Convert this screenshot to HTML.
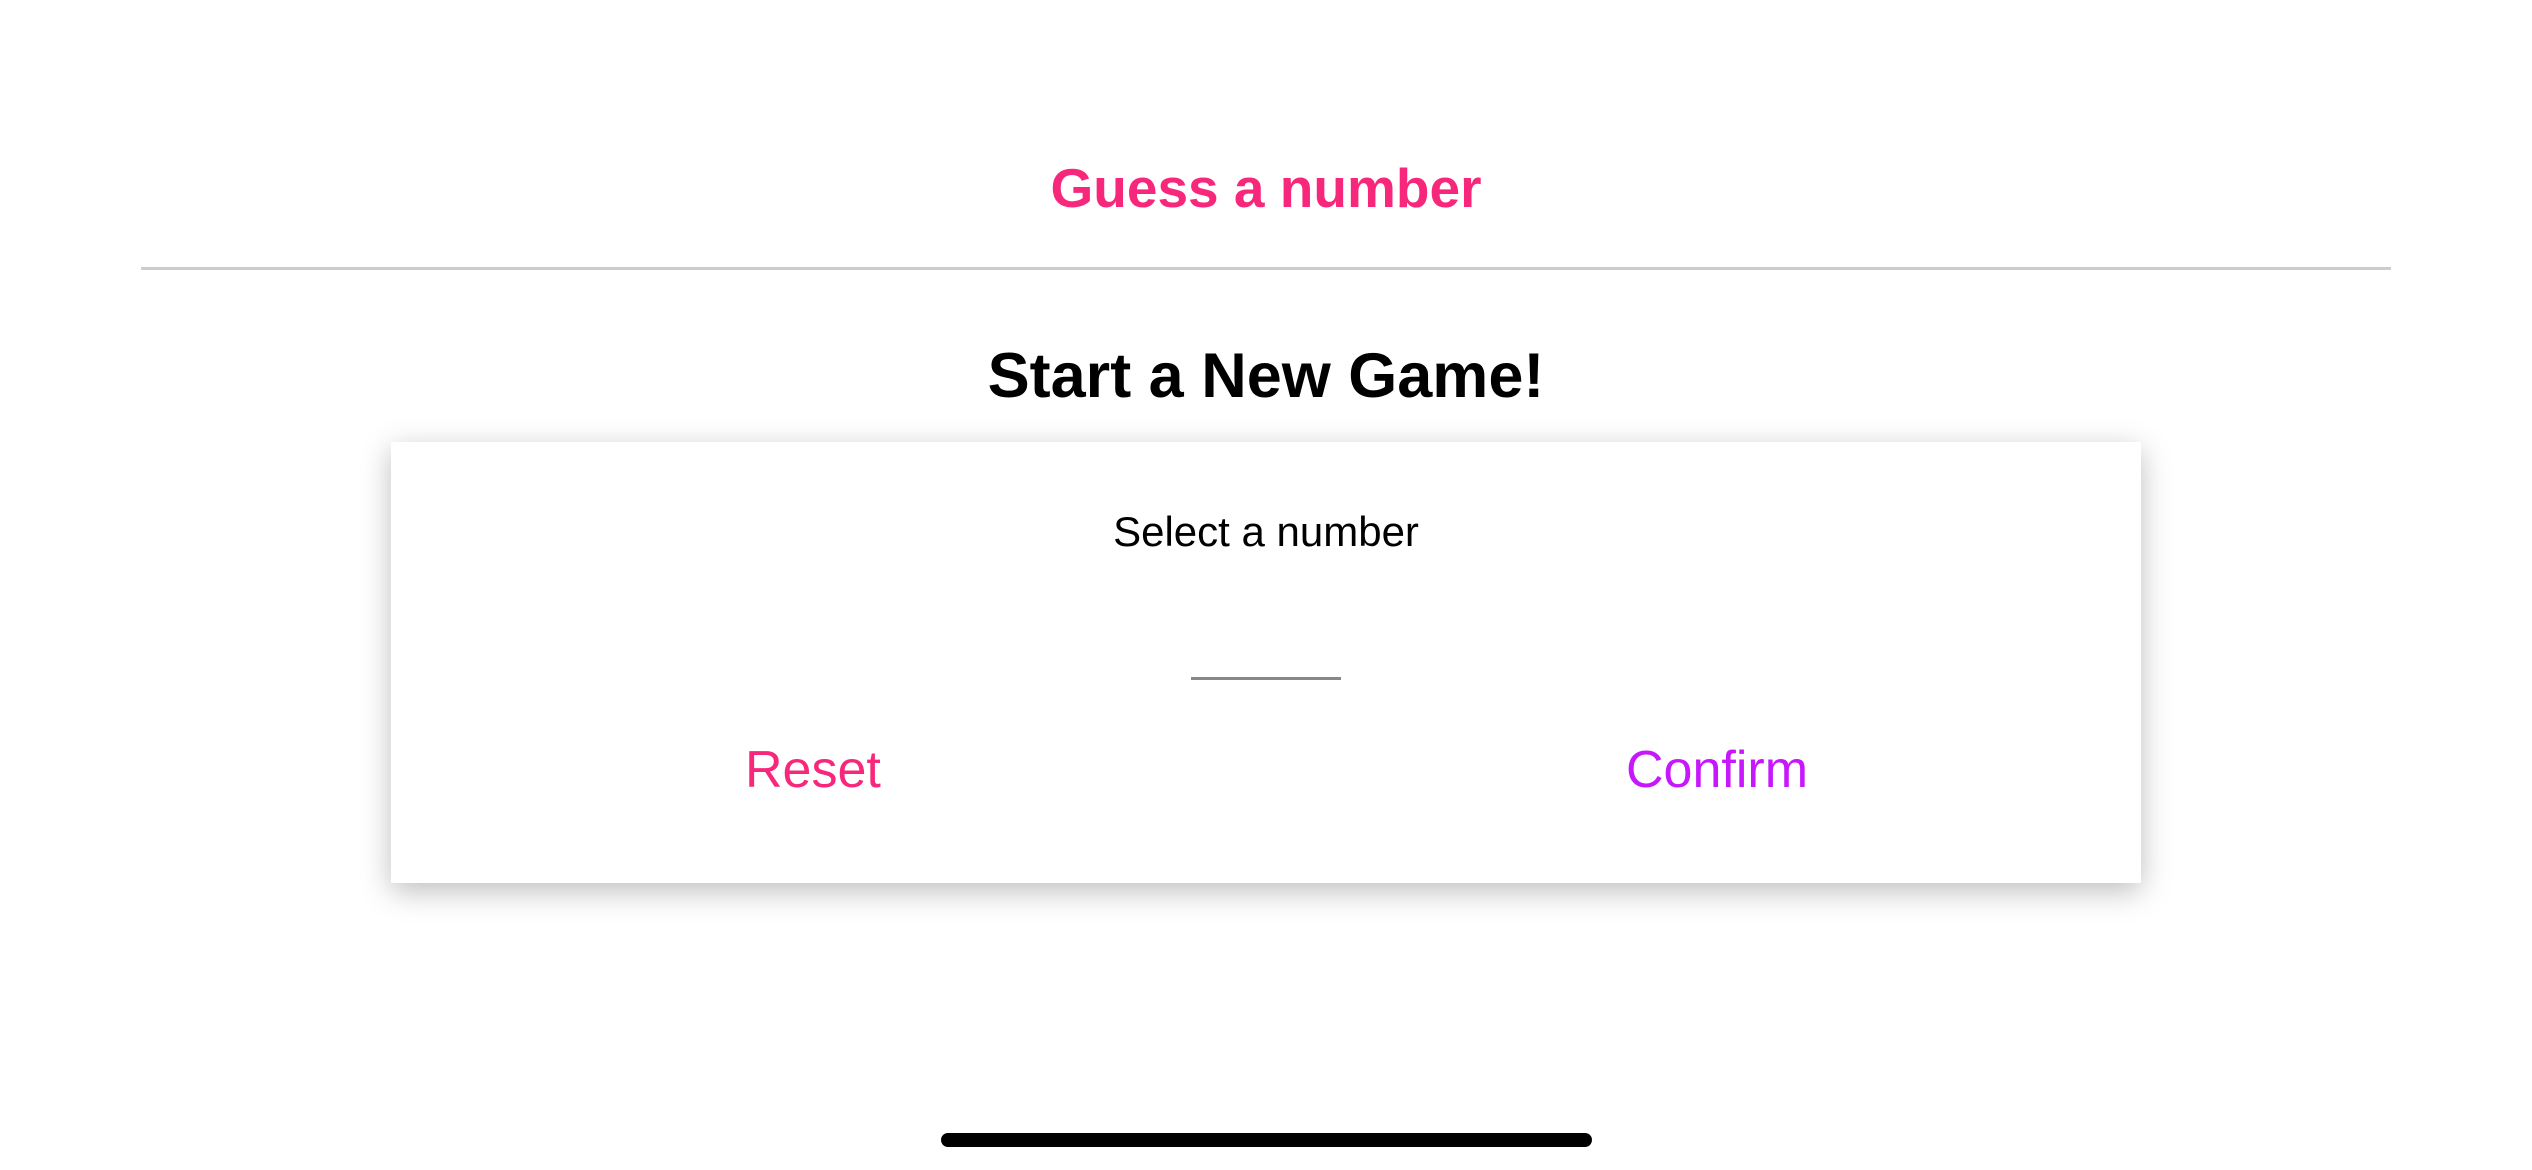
<!DOCTYPE html>
<html><head><meta charset="utf-8"><style>
html,body{margin:0;padding:0;width:2532px;height:1170px;background:#fff;overflow:hidden;font-family:"Liberation Sans",sans-serif;}
.a{position:absolute;white-space:nowrap;line-height:1;}
</style></head><body>
<div class="a" style="left:0;width:2532px;text-align:center;top:161px;font-size:55px;font-weight:bold;color:#f7287b;">Guess a number</div>
<div style="position:absolute;left:141px;width:2250px;top:267px;height:3px;background:#cccccc;"></div>
<div class="a" style="left:0;width:2532px;text-align:center;top:345px;font-size:63px;font-weight:bold;color:#000;">Start a New Game!</div>
<div style="position:absolute;left:391px;top:442px;width:1750px;height:441px;background:#fff;box-shadow:0 8px 28px rgba(0,0,0,0.26);"></div>
<div class="a" style="left:0;width:2532px;text-align:center;top:511px;font-size:42px;color:#000;">Select a number</div>
<div style="position:absolute;left:1191px;top:677px;width:150px;height:3px;background:#888;"></div>
<div class="a" style="left:745px;top:744px;font-size:52px;color:#f7287b;">Reset</div>
<div class="a" style="left:1626px;top:744px;font-size:52px;color:#c717fc;">Confirm</div>
<div style="position:absolute;left:941px;top:1133px;width:651px;height:14px;border-radius:7px;background:#000;"></div>
</body></html>
